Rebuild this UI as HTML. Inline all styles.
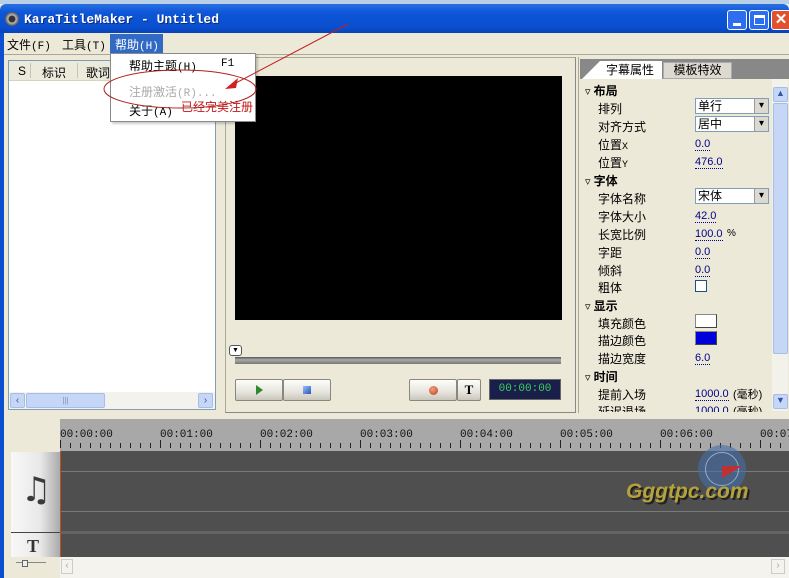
<!DOCTYPE html>
<html><head><meta charset="utf-8"><style>
*{margin:0;padding:0;box-sizing:border-box}
body{width:789px;height:578px;overflow:hidden;background:#ece9d8;position:relative;font-family:"Liberation Sans","Noto Sans CJK SC",sans-serif;font-size:12px;color:#000}
.a{position:absolute}
.mono{font-family:"Liberation Mono","Noto Sans CJK SC",monospace}
.btn{position:absolute;background:linear-gradient(#fdfdfb,#e6e4dc 60%,#c9c7bd);border:1px solid #8a887c;border-radius:2px}
.prow{position:absolute;left:598px;font-size:12px}
.val{position:absolute;left:695px;font-size:11px;border-bottom:1px dotted #00008a;color:#00008a;line-height:12px}
.dd{position:absolute;left:695px;width:74px;height:16px;background:#fff;border:1px solid #7f9db9;font-size:12px;padding-left:2px;line-height:14px}
.dd:after{content:"▾";position:absolute;right:0;top:0;width:13px;height:14px;background:#dcdad0;border-left:1px solid #9a9a9a;font-size:10px;text-align:center;line-height:14px}
.sec{position:absolute;left:585px;font-weight:bold;font-size:12px}
.sec:before{content:"▿ ";font-weight:normal;font-size:11px}
.tick{position:absolute;top:443px;width:1px;height:5px;background:#222}
.lab{position:absolute;top:429px;font-size:11px;color:#111;font-family:"Liberation Mono",monospace}
</style></head><body>
<div class="a" style="left:0;top:0;width:789px;height:4px;background:#b9cfe6"></div>
<div class="a" style="left:0;top:4px;width:789px;height:29px;background:linear-gradient(#2a6fe0,#0c56d8 30%,#0a4fcf 80%,#0843b8);border-radius:6px 6px 0 0"></div>
<div class="a" style="left:5px;top:12px;width:14px;height:14px;border-radius:50%;background:radial-gradient(#333 30%,#bbb 40%,#555 70%)"></div>
<div class="a mono" style="left:24px;top:12px;color:#fff;font-weight:bold;font-size:13px;text-shadow:1px 1px #0a2a80">KaraTitleMaker - Untitled</div>
<div class="a" style="left:727px;top:10px;width:20px;height:20px;border:1px solid #fff;border-radius:3px;background:#2d6df0"><div class="a" style="left:5px;top:12px;width:8px;height:3px;background:#fff"></div></div>
<div class="a" style="left:749px;top:10px;width:20px;height:20px;border:1px solid #fff;border-radius:3px;background:#2d6df0"><div class="a" style="left:4px;top:4px;width:11px;height:10px;border:1px solid #fff;border-top-width:3px"></div></div>
<div class="a" style="left:771px;top:10px;width:20px;height:20px;border:1px solid #fff;border-radius:3px;background:#e0512d;color:#fff;font-weight:bold;font-size:15px;text-align:center;line-height:18px">✕</div>
<div class="a" style="left:0;top:33px;width:4px;height:545px;background:#0b4fd0"></div>
<div class="a" style="left:4px;top:33px;width:785px;height:21px;background:#ece9d8"></div>
<div class="a" style="left:7px;top:36px;font-size:12px">文件<span class="mono" style="font-size:11px">(F)</span></div>
<div class="a" style="left:62px;top:36px;font-size:12px">工具<span class="mono" style="font-size:11px">(T)</span></div>
<div class="a" style="left:110px;top:34px;width:53px;height:19px;background:#316ac5;color:#fff;padding:2px 0 0 5px;font-size:12px">帮助<span class="mono" style="font-size:11px">(H)</span></div>
<div class="a" style="left:4px;top:54px;width:785px;height:1px;background:#aca899"></div>

<div class="a" style="left:8px;top:60px;width:208px;height:350px;background:#fff;border:1px solid #7f9db9"></div>
<div class="a" style="left:9px;top:61px;width:206px;height:20px;background:#ebeadb;border-bottom:1px solid #d6d2c2"></div>
<div class="a" style="left:18px;top:64px">S</div>
<div class="a" style="left:30px;top:63px;width:1px;height:15px;background:#c8c4b4"></div>
<div class="a" style="left:42px;top:64px">标识</div>
<div class="a" style="left:77px;top:63px;width:1px;height:15px;background:#c8c4b4"></div>
<div class="a" style="left:86px;top:64px">歌词</div>
<div class="a" style="left:9px;top:392px;width:206px;height:17px;background:#f3f2ec"></div>
<div class="a" style="left:10px;top:393px;width:15px;height:15px;background:#c6d6f6;border:1px solid #a8bce8;border-radius:2px;font-size:10px;text-align:center;line-height:13px;color:#3355aa">‹</div>
<div class="a" style="left:26px;top:393px;width:79px;height:15px;background:#c6d6f6;border:1px solid #a8bce8;border-radius:2px;font-size:8px;text-align:center;line-height:13px;color:#8090c0">|||</div>
<div class="a" style="left:198px;top:393px;width:15px;height:15px;background:#c6d6f6;border:1px solid #a8bce8;border-radius:2px;font-size:10px;text-align:center;line-height:13px;color:#3355aa">›</div>

<div class="a" style="left:225px;top:57px;width:351px;height:356px;border:1px solid #aca899;border-right-color:#888;border-bottom-color:#888"></div>
<div class="a" style="left:235px;top:76px;width:327px;height:244px;background:#000"></div>
<div class="a" style="left:235px;top:357px;width:326px;height:7px;background:linear-gradient(#555,#aaa 40%,#777)"></div>
<div class="a" style="left:229px;top:345px;width:13px;height:11px;background:#fff;border:1px solid #555;border-radius:3px;font-size:7px;text-align:center;line-height:9px">▼</div>
<div class="btn" style="left:235px;top:379px;width:48px;height:22px"><div class="a" style="left:20px;top:5px;width:0;height:0;border-left:7px solid #2f8a2f;border-top:5px solid transparent;border-bottom:5px solid transparent"></div></div>
<div class="btn" style="left:283px;top:379px;width:48px;height:22px"><div class="a" style="left:19px;top:6px;width:8px;height:8px;background:linear-gradient(135deg,#9bc0f4,#2356c0)"></div></div>
<div class="btn" style="left:409px;top:379px;width:48px;height:22px"><div class="a" style="left:19px;top:6px;width:9px;height:9px;border-radius:50%;background:radial-gradient(circle at 40% 35%,#f0a080,#c03a20)"></div></div>
<div class="btn" style="left:457px;top:379px;width:24px;height:22px;font-family:'Liberation Serif',serif;font-weight:bold;text-align:center;line-height:20px;font-size:13px">T</div>
<div class="a" style="left:489px;top:379px;width:72px;height:21px;background:#1a1e4a;border:1px solid #666;color:#3ad05a;font-family:'Liberation Mono',monospace;font-size:11px;text-align:center;line-height:19px">00:00:00</div>

<div class="a" style="left:578px;top:57px;width:211px;height:356px;background:#ece9d8;border-left:1px solid #aca899"></div>
<div class="a" style="left:580px;top:59px;width:209px;height:20px;background:#888"></div>
<div class="a" style="left:582px;top:61px;width:80px;height:18px;background:#fff;clip-path:polygon(18px 0,100% 0,100% 100%,0 100%);padding-left:24px;line-height:18px">字幕属性</div>
<div class="a" style="left:663px;top:62px;width:69px;height:17px;background:#dcdad0;border:1px solid #aaa;text-align:center;line-height:15px">模板特效</div>
<div class="a" style="left:580px;top:79px;width:192px;height:333px;background:#ece9d8"></div>
<div class="a" style="left:772px;top:79px;width:16px;height:332px;background:#f2f1ea"></div>
<div class="a" style="left:773px;top:87px;width:15px;height:15px;background:#c6d6f6;border:1px solid #a8bce8;border-radius:2px;font-size:9px;text-align:center;color:#3355aa">▲</div>
<div class="a" style="left:773px;top:103px;width:15px;height:251px;background:#c6d6f6;border:1px solid #a8bce8;border-radius:2px"></div>
<div class="a" style="left:773px;top:394px;width:15px;height:15px;background:#c6d6f6;border:1px solid #a8bce8;border-radius:2px;font-size:9px;text-align:center;color:#3355aa">▼</div>

<div class="sec" style="top:82px">布局</div>
<div class="prow" style="top:100px">排列</div><div class="dd" style="top:98px">单行</div>
<div class="prow" style="top:118px">对齐方式</div><div class="dd" style="top:116px">居中</div>
<div class="prow" style="top:136px">位置<span class="mono" style="font-size:10px">X</span></div><div class="val" style="top:138px">0.0</div>
<div class="prow" style="top:154px">位置<span class="mono" style="font-size:10px">Y</span></div><div class="val" style="top:156px">476.0</div>
<div class="sec" style="top:172px">字体</div>
<div class="prow" style="top:190px">字体名称</div><div class="dd" style="top:188px">宋体</div>
<div class="prow" style="top:208px">字体大小</div><div class="val" style="top:210px">42.0</div>
<div class="prow" style="top:226px">长宽比例</div><div class="val" style="top:228px">100.0</div><div class="a" style="left:727px;top:228px;font-size:10px">%</div>
<div class="prow" style="top:244px">字距</div><div class="val" style="top:246px">0.0</div>
<div class="prow" style="top:262px">倾斜</div><div class="val" style="top:264px">0.0</div>
<div class="prow" style="top:279px">粗体</div><div class="a" style="left:695px;top:280px;width:12px;height:12px;background:#fff;border:1px solid #1c5180"></div>
<div class="sec" style="top:297px">显示</div>
<div class="prow" style="top:315px">填充颜色</div><div class="a" style="left:695px;top:314px;width:22px;height:14px;background:#fff;border:1px solid #888;border-right-color:#444;border-bottom-color:#444"></div>
<div class="prow" style="top:332px">描边颜色</div><div class="a" style="left:695px;top:331px;width:22px;height:14px;background:#0000d8;border:1px solid #888;border-right-color:#444;border-bottom-color:#444"></div>
<div class="prow" style="top:350px">描边宽度</div><div class="val" style="top:352px">6.0</div>
<div class="sec" style="top:368px">时间</div>
<div class="prow" style="top:386px">提前入场</div><div class="val" style="top:388px">1000.0</div><div class="a" style="left:733px;top:386px;font-size:11px">(毫秒)</div>
<div class="a" style="left:580px;top:401px;width:192px;height:11px;overflow:hidden"><div class="a" style="left:18px;top:2px">延迟退场</div><div class="a" style="left:115px;top:4px;font-size:11px;color:#00008a">1000.0</div><div class="a" style="left:153px;top:2px;font-size:11px">(毫秒)</div></div>

<div class="a" style="left:4px;top:415px;width:785px;height:163px;background:#ece9d8"></div>
<div class="a" style="left:60px;top:419px;width:729px;height:32px;background:#a8a8a8"></div>
<div id="ticks"></div>
<div class="a" style="left:60px;top:451px;width:729px;height:106px;background:#4f4f4f"></div>
<div class="a" style="left:60px;top:471px;width:729px;height:1px;background:#7a7a7a"></div>
<div class="a" style="left:60px;top:511px;width:729px;height:1px;background:#7a7a7a"></div>
<div class="a" style="left:60px;top:531px;width:729px;height:3px;background:#636363"></div>
<div class="a" style="left:60px;top:451px;width:1px;height:106px;background:#c05020"></div>
<div class="a" style="left:11px;top:452px;width:49px;height:80px;background:linear-gradient(90deg,#f8f8f8,#e8e8e8 60%,#aaa)"></div>
<div class="a" style="left:11px;top:532px;width:49px;height:1px;background:#444"></div>
<div class="a" style="left:11px;top:533px;width:49px;height:24px;background:linear-gradient(90deg,#f8f8f8,#e8e8e8 60%,#aaa)"></div>
<div class="a" style="left:21px;top:470px;font-size:34px;color:#3a3a3a;font-family:'DejaVu Sans',sans-serif">♫</div>
<div class="a" style="left:27px;top:536px;font-family:'Liberation Serif',serif;font-weight:bold;font-size:18px;color:#333">T</div>
<div class="a" style="left:60px;top:557px;width:729px;height:21px;background:#f4f3ee"></div>
<div class="a" style="left:61px;top:559px;width:12px;height:15px;border:1px solid #ccc;color:#aaa;font-size:10px;text-align:center">‹</div>
<div class="a" style="left:771px;top:559px;width:14px;height:15px;border:1px solid #ccc;color:#aaa;font-size:10px;text-align:center">›</div>
<div class="a" style="left:16px;top:562px;width:30px;height:1px;background:#888"></div>
<div class="a" style="left:22px;top:560px;width:6px;height:7px;border:1px solid #666;background:#eee"></div>
<div class="a" style="left:698px;top:445px;width:48px;height:48px;border-radius:50%;background:rgba(70,110,170,.6)"></div>
<div class="a" style="left:705px;top:452px;width:34px;height:34px;border-radius:50%;border:1px solid rgba(200,220,240,.6)"></div>
<div class="a" style="left:722px;top:466px;width:0;height:0;border-left:20px solid #c03030;border-bottom:12px solid transparent"></div>
<div class="a" style="left:626px;top:480px;font-size:21px;font-weight:bold;font-style:italic;color:#b5a23a;text-shadow:2px 2px #222">Gggtpc.com</div>

<div class="a" style="left:110px;top:53px;width:146px;height:69px;background:#fff;border:1px solid #8a8a8a;box-shadow:2px 2px 2px rgba(0,0,0,.2)"></div>
<div class="a" style="left:129px;top:57px">帮助主题<span class="mono" style="font-size:11px">(H)</span></div>
<div class="a mono" style="left:221px;top:58px;font-size:11px">F1</div>
<div class="a" style="left:129px;top:83px;color:#aaa">注册激活<span class="mono" style="font-size:11px">(R)...</span></div>
<div class="a" style="left:129px;top:102px">关于<span class="mono" style="font-size:11px">(A)</span></div>
<div class="a" style="left:181px;top:98px;color:#c01818;font-size:12px">已经完美注册</div>
<svg class="a" style="left:0;top:0" width="789" height="578">
<ellipse cx="180" cy="89" rx="76" ry="19" fill="none" stroke="#b02020" stroke-width="1"/>
<line x1="348" y1="24" x2="232" y2="85" stroke="#c02020" stroke-width="1"/>
<polygon points="225,89 238,78 236,88" fill="#d02020"/>
</svg>
<script>
var h='';for(var x=60;x<789;x+=10){var m=(x-60)%100==0;h+='<div class="tick" style="left:'+x+'px;'+(m?'top:440px;height:8px':'')+'"></div>';}
for(var i=0;i<8;i++)h+='<div class="lab" style="left:'+(60+i*100)+'px">00:0'+i+':00</div>';
document.getElementById('ticks').innerHTML=h;
</script>
</body></html>
